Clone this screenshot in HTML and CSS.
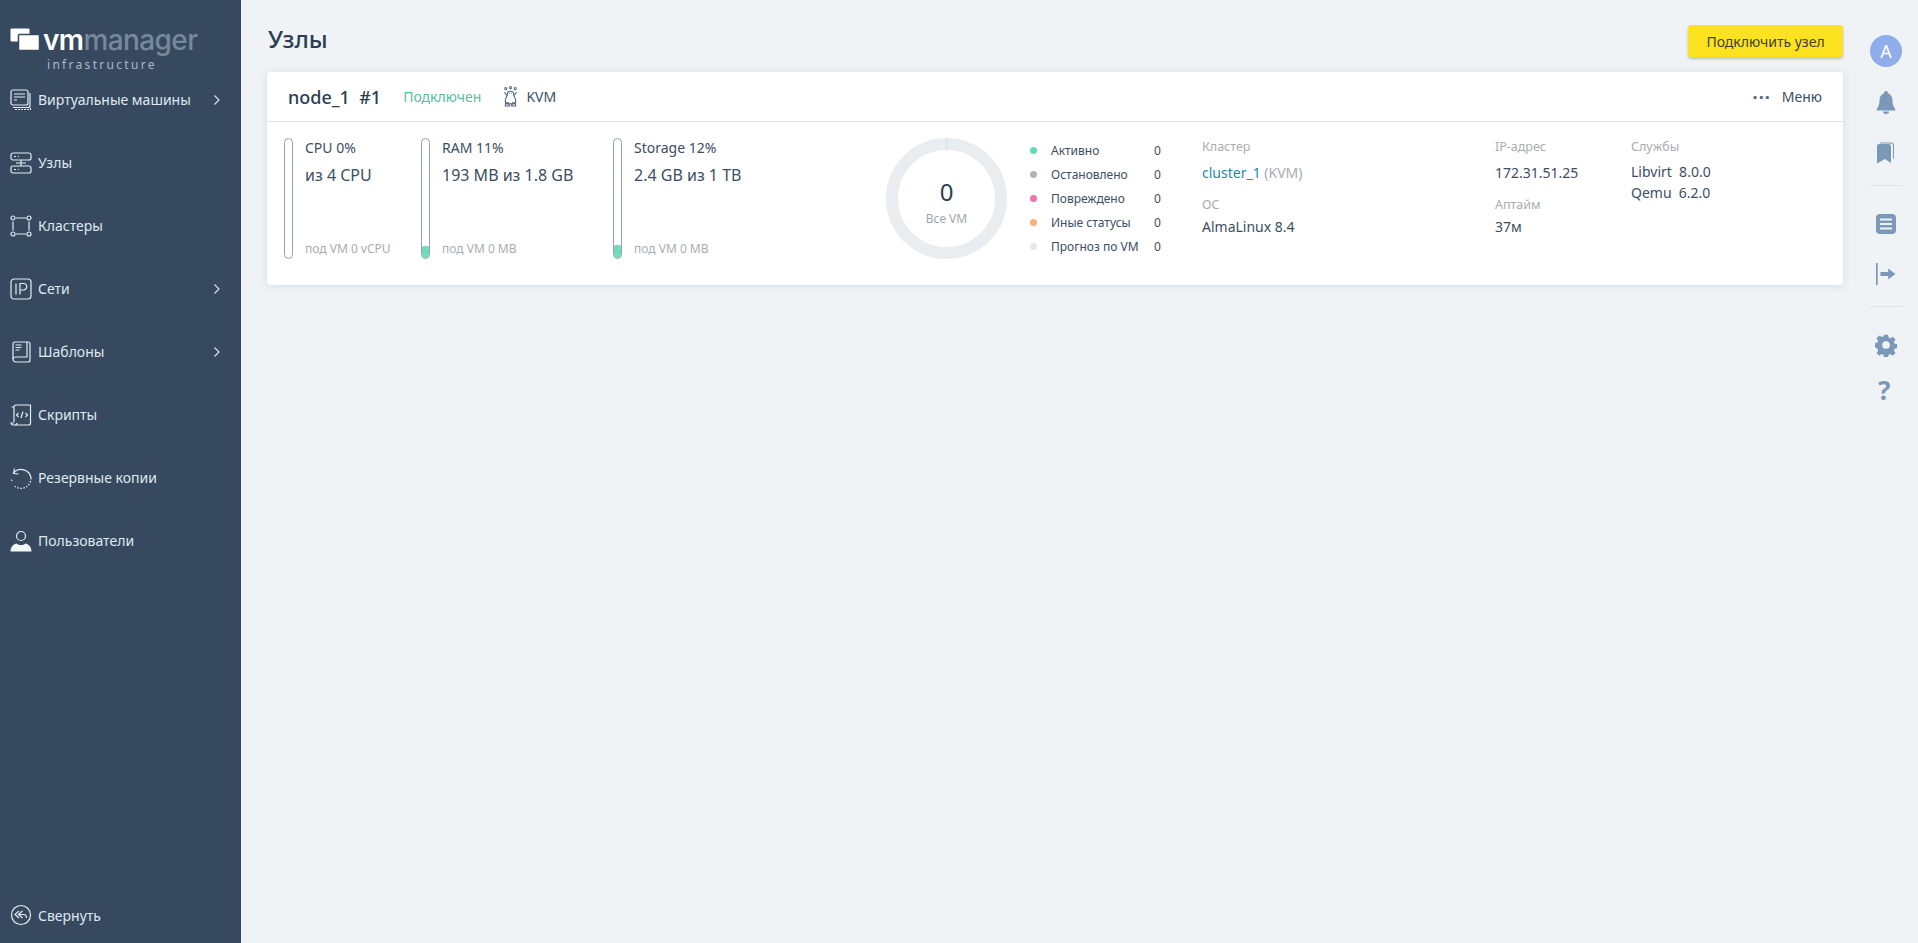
FILE: index.html
```html
<!DOCTYPE html>
<html lang="ru">
<head>
<meta charset="utf-8">
<title>Узлы</title>
<link rel="stylesheet" href="styles.css">
</head>
<body>
<aside class="sidebar">
  <div class="logo">
    <svg class="logo-mark" width="30" height="23" viewBox="0 0 30 23"><rect x="0.5" y="0.5" width="19" height="13" rx="1" fill="#fff"/><rect x="8.5" y="6.5" width="21" height="16" rx="1" fill="#fff" stroke="#36495e" stroke-width="1.5"/></svg>
    <div class="logo-text">
      <div class="logo-name"><span class="logo-vm">vm</span><span class="logo-manager">manager</span></div>
      <div class="logo-sub">infrastructure</div>
    </div>
  </div>
  <nav class="menu">
    <a class="menu-item"><svg class="mi" viewBox="0 0 22 22"><rect x="1" y="1" width="17" height="15" rx="2"/><path d="M4 5h11M4 8h11M4 11h3"/><path d="M3 18.500h15a2 2 0 0 0 2-2V4" /><path d="M5 20.500h15.500V18" stroke-dasharray="2 1"/></svg><span class="ml">Виртуальные машины</span><svg class="chev" viewBox="0 0 8 12"><path d="M1.500 1.500 6 6l-4.500 4.500"/></svg></a>
    <a class="menu-item"><svg class="mi" viewBox="0 0 22 22"><rect x="1" y="1" width="20" height="7" rx="2"/><rect x="1" y="14" width="20" height="7" rx="2"/><path d="M11 8v6M4 4.500h2M8 4.500h1M4 17.500h2M8 17.500h1M6 11h10"/></svg><span class="ml">Узлы</span></a>
    <a class="menu-item"><svg class="mi" viewBox="0 0 22 22"><circle cx="3" cy="3" r="2"/><circle cx="19" cy="3" r="2"/><circle cx="3" cy="19" r="2"/><circle cx="19" cy="19" r="2"/><path d="M6 3h10M6 19h10M3 6.500v9M19 6.500v9"/></svg><span class="ml">Кластеры</span></a>
    <a class="menu-item"><svg class="mi" viewBox="0 0 22 22"><rect x="1" y="1" width="20" height="20" rx="3"/><path d="M6 5.500v11M10 16.500v-11h3.500a3 3 0 0 1 0 6.500H10"/></svg><span class="ml">Сети</span><svg class="chev" viewBox="0 0 8 12"><path d="M1.500 1.500 6 6l-4.500 4.500"/></svg></a>
    <a class="menu-item"><svg class="mi" viewBox="0 0 22 22"><path d="M5 1h13a2 2 0 0 1 2 2v16a2 2 0 0 1-2 2H6a3 3 0 0 1-3-3V3a2 2 0 0 1 2-2z"/><path d="M3 18c0-1.500 1-2 2.500-2H17V1"/><path d="M5.500 4h6M5.500 6.500h6M5.500 9h4"/></svg><span class="ml">Шаблоны</span><svg class="chev" viewBox="0 0 8 12"><path d="M1.500 1.500 6 6l-4.500 4.500"/></svg></a>
    <a class="menu-item"><svg class="mi" viewBox="0 0 22 22"><path d="M4 18V3a2 2 0 0 1 2-2h14.500v18a2 2 0 0 1-2 2H3a2 2 0 0 1-2-2h3"/><path d="M4 3H1.500M8.500 9 6.500 11l2 2M11 14l2-6.500M15.500 9l2 2-2 2M5 21a2 2 0 0 0 2-2"/></svg><span class="ml">Скрипты</span></a>
    <a class="menu-item"><svg class="mi" viewBox="0 0 22 22"><path d="M3.500 6A10 10 0 0 1 21 11"/><path d="M21 11a10 10 0 0 1-17 7.500M2 14a10 10 0 0 1-.8-3" stroke-dasharray="1.500 1.500"/><path d="M4.500 1.500l-1 5 5 .5"/></svg><span class="ml">Резервные копии</span></a>
    <a class="menu-item"><svg class="mi" viewBox="0 0 22 22"><circle cx="11" cy="6" r="4.500"/><path class="fill" d="M0.500 21.500c0-5 3.500-7.500 6-8 2.500 2 6.500 2 9 0 2.500.5 6 3 6 8z"/></svg><span class="ml">Пользователи</span></a>
  </nav>
  <a class="menu-item collapse"><svg class="mi" viewBox="0 0 22 22"><circle cx="11" cy="11" r="9.500"/><path d="M9 7l-4 3.500L9 14M12.500 7l-4 3.500 4 3.500M8.500 10.500h5c2 0 3 1.500 3 3.500"/></svg><span class="ml">Свернуть</span></a>
</aside>
<main class="main">
  <header class="page-head">
    <h1 class="title">Узлы</h1>
    <button class="add-btn">Подключить узел</button>
  </header>
  <section class="card">
    <div class="card-head">
      <span class="node-name">node_1&nbsp;&nbsp;#1</span>
      <span class="status">Подключен</span>
      <span class="hv"><svg class="tux" viewBox="0 0 16 20"><circle cx="8" cy="1.500" r="1"/><circle cx="3.500" cy="2.500" r="1"/><circle cx="12.500" cy="2.500" r="1"/><path d="M5 8a3 3 0 0 1 6 0c0 2 2 3.500 2 6 0 2-1 3-2 3H5c-1 0-2-1-2-3 0-2.500 2-4 2-6z"/><path d="M2 6l3 3M14 6l-3 3M3 19h4l-1-3H3.500zM13 19H9l1-3h2.500zM7 7h.5M8.500 7H9"/></svg>KVM</span>
      <span class="menu-btn"><span class="dots">···</span>Меню</span>
    </div>
    <div class="card-body">
      <div class="metric m1">
        <div class="bar"></div>
        <div class="metric-text"><div class="m-top">CPU 0%</div><div class="m-val">из 4 CPU</div><div class="m-sub">под VM 0 vCPU</div></div>
      </div>
      <div class="metric m2">
        <div class="bar"><div class="bar-fill" style="height:11%"></div></div>
        <div class="metric-text"><div class="m-top">RAM 11%</div><div class="m-val">193 MB из 1.8 GB</div><div class="m-sub">под VM 0 MB</div></div>
      </div>
      <div class="metric m3">
        <div class="bar"><div class="bar-fill" style="height:12%"></div></div>
        <div class="metric-text"><div class="m-top">Storage 12%</div><div class="m-val">2.4 GB из 1 TB</div><div class="m-sub">под VM 0 MB</div></div>
      </div>
      <div class="donut">
        <span class="donut-tick"></span>
        <div class="donut-num">0</div>
        <div class="donut-lbl">Все VM</div>
      </div>
      <ul class="legend">
        <li><i class="dot d-green"></i><span class="lg-name">Активно</span><span>0</span></li>
        <li><i class="dot d-grey"></i><span class="lg-name">Остановлено</span><span>0</span></li>
        <li><i class="dot d-pink"></i><span class="lg-name">Повреждено</span><span>0</span></li>
        <li><i class="dot d-orange"></i><span class="lg-name">Иные статусы</span><span>0</span></li>
        <li><i class="dot d-light"></i><span class="lg-name">Прогноз по VM</span><span>0</span></li>
      </ul>
      <div class="info i-cluster">
        <div class="lbl">Кластер</div>
        <div class="val"><span class="link">cluster_1</span> <span class="muted">(KVM)</span></div>
        <div class="lbl second">ОС</div>
        <div class="val">AlmaLinux 8.4</div>
      </div>
      <div class="info i-ip">
        <div class="lbl">IP-адрес</div>
        <div class="val">172.31.51.25</div>
        <div class="lbl second">Аптайм</div>
        <div class="val">37м</div>
      </div>
      <div class="info i-srv">
        <div class="lbl">Службы</div>
        <div class="srv-row">Libvirt&nbsp;&nbsp;8.0.0</div>
        <div class="srv-row">Qemu&nbsp;&nbsp;6.2.0</div>
      </div>
    </div>
  </section>
</main>
<aside class="rail">
  <div class="avatar">A</div>
  <svg class="ri" viewBox="0 0 20 24"><path d="M10 0a1.800 1.800 0 0 1 1.800 2.300C15 3.200 16.500 6 16.500 9.500c0 4 1 6 2.800 8.500v1.500H.7V18c1.800-2.500 2.800-4.500 2.800-8.500 0-3.500 1.500-6.300 4.700-7.200A1.800 1.800 0 0 1 10 0z"/><path d="M7 20.500h6a3 2.500 0 0 1-6 0z"/></svg>
  <svg class="ri" viewBox="0 0 20 21"><path d="M3 0h12a3 3 0 0 1 3 3v13.500l-1-.8V3a2 2 0 0 0-2-2H4.500L3 0z"/><path d="M3 1.500h9.500a2.500 2.500 0 0 1 2.500 2.500v16.500l-6-4-8 4.500V3.500a2 2 0 0 1 2-2z" transform="translate(0 0)"/></svg>
  <hr class="rail-sep">
  <svg class="ri" viewBox="0 0 20 20"><path fill-rule="evenodd" d="M4 0h12a4 4 0 0 1 4 4v12a4 4 0 0 1-4 4H4a4 4 0 0 1-4-4V4a4 4 0 0 1 4-4zM4 4.500v2h12v-2zM4 9v2h12V9zM4 13.500v2h12v-2z"/></svg>
  <svg class="ri exit" viewBox="0 0 18 20"><path d="M0 0h1.500v20H0zM4 8.200h7V5l6.500 5-6.500 5v-3.200H4z"/></svg>
  <hr class="rail-sep">
  <svg class="ri gear" viewBox="0 0 24 24"><path fill-rule="evenodd" d="M9.800 1h4.400l.6 3.100 1.900.8 2.600-1.800 3.100 3.100-1.800 2.600.8 1.900 3.100.6v4.400l-3.100.6-.8 1.900 1.800 2.600-3.100 3.100-2.600-1.800-1.900.8-.6 3.100H9.800l-.6-3.100-1.900-.8-2.600 1.800-3.100-3.100 1.800-2.600-.8-1.900L-.5 14.400V10l3.100-.6.800-1.900L1.600 4.900l3.100-3.100 2.600 1.800 1.900-.8zM12 8a4.200 4.200 0 1 0 0 8.400A4.200 4.200 0 0 0 12 8z" transform="translate(0 -.2)"/></svg>
  <div class="help">?</div>
</aside>
</body>
</html>
```
FILE: styles.css
```css
* { box-sizing: border-box; }
html, body { margin: 0; height: 100%; }
body {
  display: flex;
  height: 943px;
  overflow: hidden;
  background: #eff3f5;
  color: #2c3e50;
  font-family: "Noto Sans", "Open Sans", sans-serif;
  font-size: 14px;
}
.sidebar {
  width: 241px;
  flex: none;
  background: #36495e;
  display: flex;
  flex-direction: column;
  color: #dfe8f1;
}
.logo { display: flex; padding: 26px 0 0 10px; height: 68px; }
.logo-mark { margin-top: 2px; flex: none; }
.logo-text { margin-left: 3px; }
.logo-name { font-family: "Inter", sans-serif; font-size: 28px; line-height: 30px; letter-spacing: -.6px; font-weight: 500; white-space: nowrap; margin-top: -1px; }
.logo-vm { color: #fff; font-weight: 600; }
.logo-manager { color: #76899c; }
.logo-sub { font-size: 12px; line-height: 14px; color: #a9b9c8; letter-spacing: 2.3px; margin: 3px 0 0 4px; }
.menu { display: flex; flex-direction: column; flex: 1; }
.menu-item { height: 63px; flex: none; display: flex; align-items: center; padding-left: 10px; position: relative; }
.mi { width: 22px; height: 22px; flex: none; fill: none; stroke: #e3ebf3; stroke-width: 1.200; }
.mi .fill { fill: #f4f7fa; stroke: none; }
.ml { margin-left: 6px; font-size: 14px; white-space: nowrap; color: #dfe8f1; }
.chev { width: 8px; height: 12px; position: absolute; left: 213px; top: 26px; fill: none; stroke: #dfe8f1; stroke-width: 1.100; }
.collapse { height: 42px; margin-bottom: 7px; }

.main { flex: 1; min-width: 0; padding: 25px 0 0 26px; }
.page-head { display: flex; justify-content: space-between; align-items: flex-start; height: 47px; }
.title { margin: 0; font-size: 24px; line-height: 28px; font-weight: 500; color: #2a3d52; padding-left: 1px; }
.add-btn {
  width: 155px; height: 32px; border: 0; border-radius: 3px;
  background: #fde31f; color: #3e4238;
  font: 14px "Noto Sans", sans-serif;
  box-shadow: 0 2px 3px rgba(0,0,0,.2);
  padding: 0;
}
.card {
  height: 213px; background: #fff; border-radius: 4px;
  box-shadow: 0 1px 8px rgba(90,120,150,.18);
}
.card-head {
  height: 50px; display: flex; align-items: center;
  border-bottom: 1px solid #dfe3e6; padding: 0 21px;
}
.node-name { font-size: 18px; font-weight: 500; color: #2a3d52; margin-right: 22px; white-space: pre; }
.status { color: #59bd9f; font-size: 14px; margin-right: 21px; }
.hv { display: flex; align-items: center; font-size: 14px; color: #3c4e62; }
.tux { width: 17px; height: 21px; margin-right: 7px; fill: none; stroke: #55667a; stroke-width: 1; }
.menu-btn { margin-left: auto; display: flex; align-items: center; color: #3c4e62; font-size: 14px; }
.dots { color: #55667a; font-size: 18px; line-height: 14px; letter-spacing: 1px; margin-right: 11px; font-weight: 700; }
.card-body { display: flex; padding: 16px 0 0 21px; font-size: 14px; }
.metric { display: flex; flex: none; }
.m1 { width: 137px; margin-left: -4px; padding-left: 0; }
.m2 { width: 192px; }
.m3 { width: 273px; }
.bar { width: 9px; height: 121px; border: 1px solid #9aa2a9; border-radius: 5px; position: relative; overflow: hidden; flex: none; }
.bar-fill { position: absolute; left: -1px; right: -1px; bottom: -1px; background: #6fdcbb; border-radius: 4px 4px 5px 5px; }
.metric-text { margin-left: 12px; display: flex; flex-direction: column; color: #3c4e62; white-space: nowrap; height: 121px; }
.m-top { font-size: 14px; line-height: 20px; margin-top: 0; }
.m-val { font-size: 16px; line-height: 22px; margin-top: 6px; }
.m-sub { font-size: 12px; line-height: 16px; color: #a8adb1; margin-top: auto; margin-bottom: 2px; }
.donut {
  width: 121px; height: 121px; flex: none; border: 12px solid #eaedef; border-radius: 50%;
  display: flex; flex-direction: column; align-items: center; position: relative; background: #fff;
}
.donut-tick { position: absolute; top: -12px; left: 47.500px; width: 1px; height: 12px; background: #d8dcdf; }
.donut-num { font-size: 24px; line-height: 28px; margin-top: 28px; color: #2a3d52; }
.donut-lbl { font-size: 12px; line-height: 16px; color: #a0a6aa; margin-top: 5px; }
.legend { list-style: none; margin: 0 0 0 22px; padding: 0; width: 173px; flex: none; color: #3c4e62; font-size: 12px; }
.legend li { display: flex; align-items: center; height: 24px; margin-top: 0; }
.dot { width: 7px; height: 7px; border-radius: 50%; margin-right: 14px; flex: none; margin-left: 1px; }
.lg-name { width: 103px; white-space: nowrap; }
.d-green { background: #62dcb6; }
.d-grey { background: #b1b3b5; }
.d-pink { background: #ee74ac; }
.d-orange { background: #f6b17d; }
.d-light { background: #e6e9eb; }
.info { flex: none; color: #3c4e62; font-size: 14px; }
.i-cluster { width: 293px; }
.i-ip { width: 136px; }
.lbl { font-size: 12.500px; line-height: 18px; color: #a8adb1; }
.val { line-height: 20px; margin-top: 7px; }
.second { margin-top: 13px; }
.second + .val { margin-top: 3px; }
.link { color: #2189b0; }
.muted { color: #a8adb1; }
.srv-row { line-height: 21px; }
.lbl + .srv-row { margin-top: 5px; }

.rail { width: 75px; flex: none; padding: 35px 0 0 19px; display: flex; flex-direction: column; align-items: center; }
.rail { align-items: flex-start; padding-left: 27px; }
.avatar { width: 32px; height: 32px; border-radius: 50%; background: #8fadeb; color: #fff; font-size: 18px; text-align: center; line-height: 32px; font-family: "Noto Sans", sans-serif; }
.ri { width: 20px; height: 24px; fill: #7a98b8; margin: 0 0 0 6px; flex: none; }
.rail .ri { margin-top: 26px; }
.rail .avatar + .ri { margin-top: 24px; }
.rail-sep { width: 32px; margin: 20px 0 0; border: 0; border-top: 1px solid #dde2e6; }
.exit { fill: #7a98b8; }
.gear { width: 22px; height: 24px; margin-left: 5px; }
.help { font-size: 26px; line-height: 30px; color: #7a98b8; font-weight: 700; margin: 18px 0 0 8px; }
```
